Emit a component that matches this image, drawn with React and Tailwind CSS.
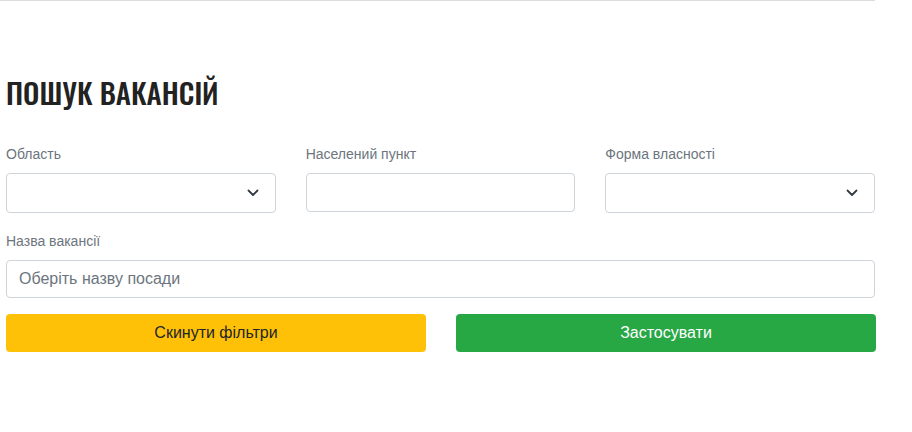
import React from "react";

function Chevron() {
  return (
    <svg width="12" height="8" viewBox="0 0 12 8" fill="none" className="shrink-0">
      <path d="M1.5 1.5 L6 6 L10.5 1.5" stroke="#343a40" strokeWidth="1.8" strokeLinecap="round" strokeLinejoin="round" />
    </svg>
  );
}

function Label({ children }) {
  return <div className="text-[14px] leading-[20px] text-[#6c757d] mb-[9px]">{children}</div>;
}

function SelectBox() {
  return (
    <div className="h-[40px] border border-[#ced4da] rounded-[4px] bg-white flex items-center justify-end pr-[16px]">
      <Chevron />
    </div>
  );
}

export default function App() {
  return (
    <div
      className="w-[912px] h-[432px] bg-white overflow-hidden"
      style={{ fontFamily: '"Liberation Sans", Arial, sans-serif' }}
    >
      <div className="w-[875px]">
        <div className="h-px bg-[#dcdcdc]" />
        <div className="pl-[6px] pt-[73px]">
          <h1
            className="text-[29px] leading-[36px] font-medium text-[#222222] uppercase"
            style={{ fontFamily: '"Oswald", "Liberation Sans Narrow", "DejaVu Sans Condensed", sans-serif' }}
          >
            ПОШУК ВАКАНСІЙ
          </h1>
          <div className="mt-[34px] grid grid-cols-3 gap-x-[30px]">
            <div>
              <Label>Область</Label>
              <SelectBox />
            </div>
            <div>
              <Label>Населений пункт</Label>
              <div className="h-[39px] border border-[#ced4da] rounded-[4px] bg-white" />
            </div>
            <div>
              <Label>Форма власності</Label>
              <SelectBox />
            </div>
          </div>
          <div className="mt-[18px]">
            <Label>Назва вакансії</Label>
            <div className="h-[38px] border border-[#ced4da] rounded-[4px] bg-white flex items-center px-[12px] text-[16px] text-[#6c757d]">
              Оберіть назву посади
            </div>
          </div>
          <div className="mt-[16px] grid grid-cols-2 gap-x-[30px] w-[870px]">
            <button className="h-[38px] rounded-[4px] bg-[#ffc107] text-[#212529] text-[16px]">
              Скинути фільтри
            </button>
            <button className="h-[38px] rounded-[4px] bg-[#28a745] text-white text-[16px]">
              Застосувати
            </button>
          </div>
        </div>
      </div>
    </div>
  );
}
